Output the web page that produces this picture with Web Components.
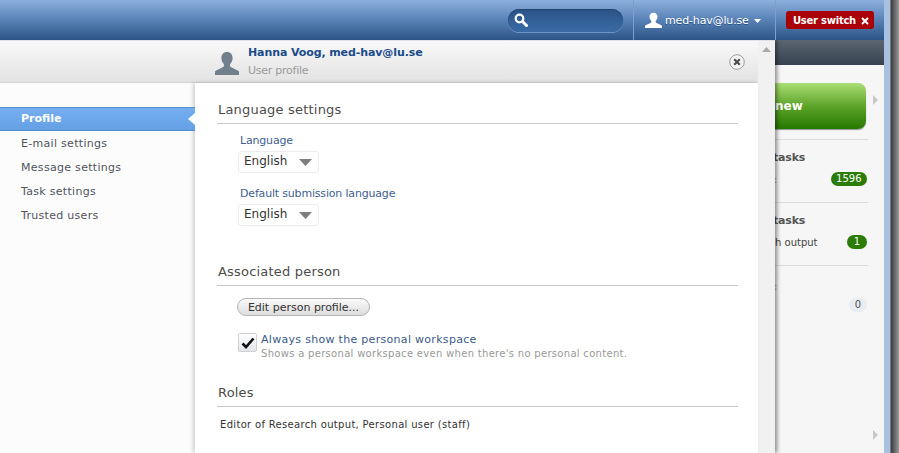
<!DOCTYPE html>
<html>
<head>
<meta charset="utf-8">
<title>User profile</title>
<style>
	html, body { margin: 0; height: 453px; overflow: hidden; }
	body {
		display: flex;
		font: 11px "DejaVu Sans", sans-serif;
		background: linear-gradient(90deg, #a9c1df 0, #a9c1df 6px, #3c3c3c 7px, #9a9a9a 15px) 884px 0 / 15px 100% no-repeat;
	}
</style>
</head>
<body>
<app-window>
	<top-bar></top-bar>
	<profile-panel>
		<nav-item active>Profile</nav-item>
		<nav-item>E-mail settings</nav-item>
		<nav-item>Message settings</nav-item>
		<nav-item>Task settings</nav-item>
		<nav-item>Trusted users</nav-item>

		<form-section slot="content" heading="Language settings" style="--gap-after: 36px">
			<label-select label="Language" value="English"></label-select>
			<label-select label="Default submission language" value="English"></label-select>
		</form-section>
		<form-section slot="content" heading="Associated person" style="--gap-after: 22px">
			<push-button>Edit person profile...</push-button>
			<check-option help="Shows a personal workspace even when there's no personal content.">Always show the personal workspace</check-option>
		</form-section>
		<form-section slot="content" heading="Roles" flat>
			<plain-text>Editor of Research output, Personal user (staff)</plain-text>
		</form-section>
	</profile-panel>
	<side-column></side-column>
</app-window>

<script>
;(function(customElements) {
	const personPath = 'M12 1c-3.600 0-5.600 2.600-5.600 6 0 2.600 1 4.600 2.400 6 .4 1.200.2 2.400-.6 3C6 17.600 1.500 18.600 0 20.500V24h24v-3.500c-1.500-1.900-6-2.900-8.200-4.500-.8-.6-1-1.800-.6-3 1.400-1.400 2.400-3.400 2.400-6 0-3.400-2-6-5.600-6z'

	function define(name, css, html) {
		customElements.define(name, class extends HTMLElement {
			constructor() {
				super()
				this.attachShadow({ mode: 'open' })
			}

			connectedCallback() {
				this.render()
			}

			render() {
				const get = key => this.getAttribute(key) || ''
				this.shadowRoot.innerHTML = `<style>${css}</style>${typeof html === 'function' ? html(get) : html}`
			}
		})
	}

	define('app-window', `
		:host {
			display: grid;
			grid-template-columns: 775px 109px;
			grid-template-rows: 40px 413px;
			width: 884px;
			height: 453px;
			overflow: hidden;
		}
		::slotted(top-bar) { grid-column: 1 / 3; }
	`, '<slot></slot>')

	define('top-bar', `
		:host {
			display: flex;
			align-items: center;
			justify-content: flex-end;
			height: 40px;
			box-sizing: border-box;
			background: linear-gradient(#8db0dd, #5d86ba 45%, #2c5486);
			color: #fff;
			position: relative;
			z-index: 2;
		}
		.search {
			display: flex;
			align-items: center;
			box-sizing: border-box;
			width: 115px;
			height: 23px;
			margin-right: 10px;
			padding-left: 6px;
			border-radius: 12px;
			background: linear-gradient(#2a5488, #3a6aa5);
			box-shadow: inset 0 1px 1px #23466f, 0 1px 0 #6f94c4;
		}
		.user {
			display: flex;
			align-items: center;
			box-sizing: border-box;
			width: 143px;
			height: 40px;
			padding-left: 11px;
			border-left: 1px solid #7f9fc8;
			border-right: 1px solid #7f9fc8;
			font-size: 11px;
			letter-spacing: -.15px;
			white-space: nowrap;
			text-shadow: 0 1px 0 #2c5486;
		}
		.user svg:first-child { margin-right: 3px; }
		.user svg:last-child { margin-left: 5px; margin-top: 2px; }
		.switch {
			display: flex;
			align-items: center;
			box-sizing: border-box;
			flex: none;
			width: 88px;
			height: 18px;
			margin: 0 10px;
			padding-left: 7px;
			border-radius: 3px;
			background: #a80005;
			font-size: 10px;
			font-weight: bold;
			letter-spacing: -.25px;
			white-space: nowrap;
		}
		.switch svg { flex: none; margin-left: 5px; margin-top: 2px; }
	`, `
		<div class="search">
			<svg width="14" height="14" viewBox="0 0 14 14"><circle cx="5.500" cy="5.500" r="3.800" fill="none" stroke="#fff" stroke-width="2.200"/><path d="M8.500 8.500L12.500 12.500" stroke="#fff" stroke-width="3" stroke-linecap="round"/></svg>
		</div>
		<div class="user">
			<svg width="17" height="16" viewBox="0 0 24 24" preserveAspectRatio="none"><path fill="#fff" d="${personPath}"/></svg>
			<span>med-hav@lu.se</span>
			<svg width="7" height="4" viewBox="0 0 7 4"><path fill="#fff" d="M0 0h7L3.500 4z"/></svg>
		</div>
		<div class="switch">
			<span>User switch</span>
			<svg width="8" height="8" viewBox="0 0 8 8"><path d="M1 1l6 6M7 1l-6 6" stroke="#fff" stroke-width="2"/></svg>
		</div>
	`)

	define('profile-panel', `
		:host {
			display: flex;
			position: relative;
			z-index: 1;
			height: 413px;
			background: #f1f1f1;
			border-top: 1px solid #dfe3e8;
			box-sizing: border-box;
			box-shadow: 2px 0 4px rgba(0, 0, 0, .45);
		}
		.main {
			display: flex;
			flex-direction: column;
			width: 758px;
		}
		header {
			display: flex;
			align-items: flex-start;
			box-sizing: border-box;
			height: 42px;
			padding: 10px 13px 0 215px;
			background: linear-gradient(#f8f8f8, #e3e3e3);
			border-bottom: 1px solid #d4d4d4;
		}
		header svg.person { margin-right: 9px; }
		.titles { flex: 1; margin-top: -5px; }
		.title { font-size: 11px; line-height: 14px; font-weight: bold; letter-spacing: -.1px; color: #1b4c8a; }
		.sub { font-size: 11px; line-height: 14px; margin-top: 4px; letter-spacing: -.25px; color: #9a9a9a; }
		.close { margin-top: 3px; }
		.body { display: flex; flex: 1; min-height: 0; }
		nav {
			box-sizing: border-box;
			width: 195px;
			padding-top: 24px;
			background: #fcfcfd;
		}
		.content {
			flex: 1;
			box-sizing: border-box;
			padding: 17px 20px 0 22px;
			background: #fff;
			box-shadow: -2px 0 4px rgba(0, 0, 0, .18);
		}
		.track {
			flex: none;
			width: 17px;
			display: flex;
			justify-content: center;
			padding-top: 6px;
		}
	`, `
		<div class="main">
			<header>
				<svg class="person" width="24" height="24" viewBox="0 0 24 24"><path fill="#727f8d" d="${personPath}"/></svg>
				<div class="titles">
					<div class="title">Hanna Voog, med-hav@lu.se</div>
					<div class="sub">User profile</div>
				</div>
				<svg class="close" width="16" height="16" viewBox="0 0 16 16"><circle cx="8" cy="8" r="7.300" fill="#f4f4f4" stroke="#9c9c9c"/><path d="M5.200 5.200l5.600 5.600M10.800 5.200l-5.600 5.600" stroke="#4e4e4e" stroke-width="2.200"/></svg>
			</header>
			<div class="body">
				<nav><slot></slot></nav>
				<div class="content"><slot name="content"></slot></div>
			</div>
		</div>
		<div class="track">
			<svg width="9" height="5" viewBox="0 0 9 5"><path fill="#a9a9a9" d="M4.500 0L9 5H0z"/></svg>
		</div>
	`)

	define('nav-item', `
		:host {
			display: block;
			position: relative;
			height: 24px;
			padding-left: 21px;
			font-size: 11px;
			line-height: 26px;
			letter-spacing: .3px;
			color: #50545c;
		}
		:host([active]) {
			background: linear-gradient(#76aef0, #64a0e6);
			box-shadow: inset 0 1px 0 #568cc9, inset 0 -1px 0 #568cc9;
			color: #fff;
			font-weight: bold;
			line-height: 24px;
			letter-spacing: 0;
		}
		:host([active])::after {
			content: '';
			position: absolute;
			right: 0;
			top: 6px;
			border: 6px solid transparent;
			border-left: 0;
			border-right: 7px solid #fff;
		}
	`, '<slot></slot>')

	define('form-section', `
		:host {
			display: block;
			margin-bottom: var(--gap-after, 0);
		}
		h2 {
			margin: 0;
			padding: 1px 0 5px 1px;
			height: 17px;
			font-size: 13px;
			font-weight: normal;
			line-height: 17px;
			letter-spacing: .2px;
			color: #4c4c4c;
			border-bottom: 1px solid #c6c6c6;
		}
		.inner { padding: 10px 0 0 23px; }
		:host([flat]) .inner { padding: 11px 0 0 3px; }
	`, get => `<h2>${get('heading')}</h2><div class="inner"><slot></slot></div>`)

	define('label-select', `
		:host {
			display: block;
			margin-bottom: 14px;
		}
		.label {
			font-size: 11px;
			line-height: 14px;
			letter-spacing: -.18px;
			color: #3f6090;
		}
		.select {
			display: flex;
			align-items: center;
			justify-content: space-between;
			box-sizing: border-box;
			width: 81px;
			height: 22px;
			margin-top: 3px;
			margin-left: -2px;
			padding: 0 6px 2px 5px;
			border: 1px solid #ececec;
			border-radius: 3px;
			font-size: 12px;
			color: #333;
			background: #fff;
		}
		.select svg { margin-top: 2px; }
	`, get => `
		<div class="label">${get('label')}</div>
		<div class="select">
			<span>${get('value')}</span>
			<svg width="13" height="7" viewBox="0 0 13 7"><path fill="#7e7e7e" d="M0 0h13L6.500 7z"/></svg>
		</div>
	`)

	define('push-button', `
		:host {
			display: flex;
			align-items: center;
			justify-content: center;
			box-sizing: border-box;
			width: 133px;
			height: 18px;
			margin: 2px 0 17px -3px;
			border: 1px solid #b5b5b5;
			border-radius: 9px;
			background: linear-gradient(#fbfbfb, #dcdcdc);
			font-size: 11px;
			color: #333;
			white-space: nowrap;
		}
	`, '<slot></slot>')

	define('check-option', `
		:host {
			display: flex;
			margin-left: -2px;
		}
		.box {
			flex: none;
			display: flex;
			align-items: center;
			justify-content: center;
			box-sizing: border-box;
			width: 19px;
			height: 19px;
			margin-right: 4px;
			border: 1px solid #d0d0d0;
			border-radius: 2px;
			background: linear-gradient(#fff, #e2e5ea);
		}
		.text { font-size: 11px; line-height: 14px; letter-spacing: .3px; white-space: nowrap; color: #3b5a88; }
		.help { font-size: 10px; line-height: 14px; letter-spacing: .3px; white-space: nowrap; color: #999; }
	`, get => `
		<div class="box">
			<svg width="14" height="12" viewBox="0 0 14 12"><path d="M1.500 6.500L5 10 12.500 1.500" fill="none" stroke="#111" stroke-width="2.600"/></svg>
		</div>
		<div>
			<div class="text"><slot></slot></div>
			<div class="help">${get('help')}</div>
		</div>
	`)

	define('plain-text', `
		:host {
			display: block;
			font-size: 10px;
			line-height: 14px;
			letter-spacing: .32px;
			color: #333;
			white-space: nowrap;
		}
	`, '<slot></slot>')

	define('side-column', `
		:host {
			display: flex;
			flex-direction: column;
			height: 413px;
			background: #f6f6f6;
		}
		.bar {
			flex: none;
			height: 25px;
			background: linear-gradient(#5b6672, #36424f);
		}
		.list {
			display: flex;
			flex-direction: column;
			flex: 1;
			width: 93px;
			padding-top: 18px;
		}
		.top { display: flex; }
		.create {
			flex: none;
			display: flex;
			align-items: center;
			box-sizing: border-box;
			width: 91px;
			height: 46px;
			border-radius: 0 8px 8px 0;
			background: linear-gradient(#aade74, #5ea42a 50%, #267800);
			box-shadow: 0 1px 1px rgba(0, 0, 0, .4);
			color: #fff;
			font-size: 12px;
			font-weight: bold;
		}
		.more {
			flex: none;
			align-self: flex-start;
			width: 0;
			border-left: 5px solid #c8c8c8;
			border-top: 5px solid transparent;
			border-bottom: 5px solid transparent;
		}
		.top .more { margin: 12px 0 0 7px; }
		.list > .more { margin: auto 0 13px 98px; }
		.group {
			box-sizing: border-box;
			height: 63px;
			padding-top: 11px;
			border-top: 1px solid #dcdcdc;
		}
		.first { margin-top: 10px; }
		h3 {
			margin: 0 0 0 -2px;
			font-size: 11px;
			line-height: 14px;
			letter-spacing: -.2px;
			color: #555;
			white-space: nowrap;
		}
		.row {
			display: flex;
			align-items: center;
			justify-content: space-between;
			margin-top: 7px;
			padding-right: 1px;
			font-size: 10px;
			color: #444;
			white-space: nowrap;
		}
		.badge {
			height: 14px;
			padding: 0 5.500px;
			border-radius: 7px;
			background: #2a7c05;
			color: #fff;
			font-size: 10px;
			line-height: 14px;
		}
		.one { padding: 0 6.800px; }
		.zero { background: #e7edf3; color: #555; padding: 0 6px; }
		.tail { color: #999; margin-left: -1px; }
	`, `
		<div class="bar"></div>
		<div class="list">
			<div class="top">
				<div class="create">new</div>
				<div class="more"></div>
			</div>
			<div class="group first">
				<h3>tasks</h3>
				<div class="row"><span class="tail">:</span><span class="badge">1596</span></div>
			</div>
			<div class="group">
				<h3>tasks</h3>
				<div class="row"><span>h output</span><span class="badge one">1</span></div>
			</div>
			<div class="group" style="padding-top: 13px">
				<div class="row" style="height: 14px; margin-top: 0"><span class="tail">:</span></div>
				<div class="row" style="margin-top: 5px; justify-content: flex-end"><span class="badge zero">0</span></div>
			</div>
			<div class="more"></div>
		</div>
	`)
})(customElements)
</script>
</body>
</html>
